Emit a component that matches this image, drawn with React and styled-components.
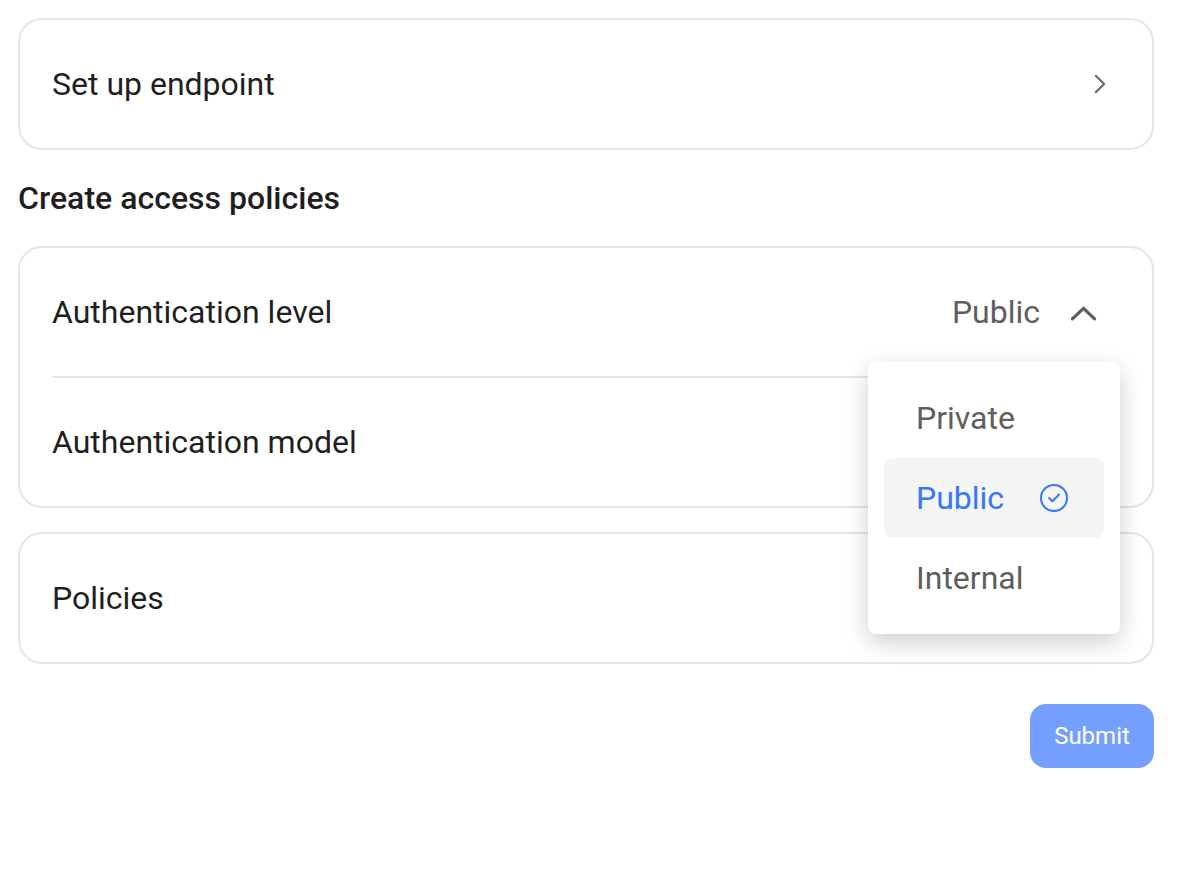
import React from "react";
import styled, { createGlobalStyle } from "styled-components";

const GlobalStyle = createGlobalStyle`
  * { box-sizing: border-box; }
  body { margin: 0; background: #fff; font-family: Roboto, sans-serif; color: #1f1f1f; }
`;

const Page = styled.main`
  display: flex;
  flex-direction: column;
  width: 1202px;
  height: 878px;
  padding: 18px 48px 0 18px;
  overflow: hidden;
`;

const Card = styled.section`
  border: 2px solid #e5e5e5;
  border-radius: 24px;
  padding: 0 32px;
  margin-bottom: ${(p) => p.$gap || 0}px;
`;

const Row = styled.div`
  position: relative;
  display: flex;
  align-items: center;
  justify-content: space-between;
  height: ${(p) => p.$height || 128}px;
  border-bottom: ${(p) => (p.$divided ? "2px solid #e5e5e5" : "none")};
`;

const Label = styled.span`
  font-size: 32px;
  line-height: 48px;
`;

const Heading = styled.h2`
  margin: 0 0 24px;
  font-size: 32px;
  line-height: 48px;
  font-weight: 500;
  letter-spacing: 0.02px;
`;

const Value = styled.div`
  display: flex;
  align-items: center;
  gap: 30px;
  padding-right: 24px;
  color: #5e5e5e;
`;

const Icon = styled.svg`
  flex: none;
  fill: none;
  stroke: currentColor;
  stroke-linecap: round;
  stroke-linejoin: round;
`;

const ChevronRight = styled(Icon)`
  width: 12px;
  height: 20px;
  margin-right: 14px;
  color: #6b6b6b;
  stroke-width: 2.2px;
`;

const ChevronUp = styled(Icon)`
  width: 26px;
  height: 16px;
  stroke-width: 3.2px;
`;

const CheckCircle = styled(Icon)`
  width: 28px;
  height: 28px;
  stroke-width: 2px;
`;

const Menu = styled.ul`
  position: absolute;
  z-index: 1;
  top: 114px;
  right: 0;
  width: 252px;
  margin: 0;
  padding: 16px;
  list-style: none;
  background: #fff;
  border-radius: 8px;
  box-shadow: 0 8px 24px rgba(0, 0, 0, 0.2);
`;

const Option = styled.li`
  display: flex;
  align-items: center;
  justify-content: space-between;
  height: 80px;
  padding: 0 36px 0 32px;
  border-radius: 8px;
  color: ${(p) => (p.$selected ? "#3377ff" : "#5e5e5e")};
  background: ${(p) => (p.$selected ? "#f5f5f5" : "transparent")};
`;

const Submit = styled.button`
  align-self: flex-end;
  width: 124px;
  height: 64px;
  padding: 0;
  border: 0;
  border-radius: 16px;
  background: #759fff;
  color: #fff;
  font: 400 24px/32px Roboto, sans-serif;
`;

const options = ["Private", "Public", "Internal"];

export default function App() {
  return (
    <Page>
      <GlobalStyle />
      <Card $gap={24}>
        <Row>
          <Label>Set up endpoint</Label>
          <ChevronRight viewBox="0 0 12 20">
            <path d="M1.8 1.8L10.1 10L1.8 18.2" />
          </ChevronRight>
        </Row>
      </Card>
      <Heading>Create access policies</Heading>
      <Card $gap={24}>
        <Row $divided $height={130}>
          <Label>Authentication level</Label>
          <Value>
            <Label>Public</Label>
            <ChevronUp viewBox="0 0 26 16" overflow="visible">
              <path d="M2.4 14.9L13.5 4.3L24.6 14.9" />
            </ChevronUp>
          </Value>
          <Menu>
            {options.map((name) => (
              <Option key={name} $selected={name === "Public"}>
                <Label>{name}</Label>
                {name === "Public" && (
                  <CheckCircle viewBox="0 0 28 28">
                    <circle cx="14" cy="14" r="13" />
                    <path d="M9 14.1L12.4 17.2L19 10.5" />
                  </CheckCircle>
                )}
              </Option>
            ))}
          </Menu>
        </Row>
        <Row>
          <Label>Authentication model</Label>
        </Row>
      </Card>
      <Card $gap={40}>
        <Row>
          <Label>Policies</Label>
        </Row>
      </Card>
      <Submit>Submit</Submit>
    </Page>
  );
}
